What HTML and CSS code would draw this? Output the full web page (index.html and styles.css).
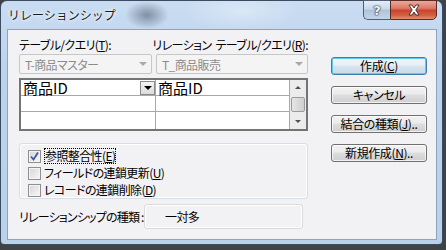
FILE: index.html
```html
<!DOCTYPE html>
<html>
<head>
  <meta charset="utf-8">
  <link rel="stylesheet" href="styles.css">
</head>
<body>
  <div class="window">
    <div class="titlebar">
      <span class="title">リレーションシップ</span>
      <div class="caption">
        <button class="cap-btn help">?</button>
        <button class="cap-btn close">
          <svg viewBox="0 0 16 12">
            <path d="M3,1H6L8,4L10,1H13L9.8,6L13,11H10L8,8L6,11H3L6.2,6Z"/>
          </svg>
        </button>
      </div>
    </div>

    <div class="client">
      <div class="main">
        <div class="labels">
          <span class="label-left">テーブル/クエリ(<u>T</u>):</span>
          <span>リレーション<span class="gap"></span>テーブル/クエリ(<u>R</u>):</span>
        </div>

        <div class="combos">
          <div class="combo combo-left"><span>T-商品マスター</span><i class="arrow"></i></div>
          <div class="combo combo-right"><span>T_商品販売</span><i class="arrow"></i></div>
        </div>

        <div class="grid">
          <div class="cell first">商品ID<span class="drop"><i></i></span></div>
          <div class="cell">商品ID</div>
          <div class="scroll">
            <span class="sb-arrow up"><i></i></span>
            <span class="sb-thumb"></span>
            <span class="sb-arrow down"><i></i></span>
          </div>
          <div class="cell first"></div>
          <div class="cell"></div>
          <div class="cell first last"></div>
          <div class="cell last"></div>
        </div>

        <div class="group">
          <label class="check-row">
            <span class="check on">
              <svg viewBox="0 0 11 11"><path d="M2,5.5L4.5,8.5L9,1.5"/></svg>
            </span>
            <span class="focus">参照整合性(<u>E</u>)</span>
          </label>
          <label class="check-row">
            <span class="check"></span>
            <span>フィールドの連鎖更新(<u>U</u>)</span>
          </label>
          <label class="check-row">
            <span class="check"></span>
            <span>レコードの連鎖削除(<u>D</u>)</span>
          </label>
        </div>

        <div class="reltype">
          <span class="reltype-label">リレーションシップの種類&nbsp;:</span>
          <div class="reltype-box">一対多</div>
        </div>
      </div>

      <div class="side">
        <button class="btn default">作成(<u>C</u>)</button>
        <button class="btn">キャンセル</button>
        <button class="btn">結合の種類(<u>J</u>)..</button>
        <button class="btn">新規作成(<u>N</u>)..</button>
      </div>
    </div>
  </div>
</body>
</html>
```

FILE: styles.css
```css
* {
  box-sizing: border-box;
}

body {
  width: 446px;
  height: 250px;
  margin: 0;
  overflow: hidden;
  background: #3f4346;
  font-family: "Noto Sans CJK JP", sans-serif;
  font-size: 12px;
  color: #000;
}

u {
  text-decoration: underline;
  text-underline-offset: 1px;
}

.window {
  width: 443px;
  height: 245px;
  display: flex;
  flex-direction: column;
  padding: 0 5px 4px 6px;
  border: 1px solid #3b4b60;
  border-radius: 7px 7px 4px 4px;
  background:
    radial-gradient(ellipse 22px 14px at 146px 14px, rgba(60, 70, 85, 0.5), rgba(60, 70, 85, 0)),
    radial-gradient(ellipse 60px 20px at 240px 10px, rgba(255, 255, 255, 0.35), rgba(255, 255, 255, 0)),
    linear-gradient(#c9dcf2, #bcd3ec 30%, #b9d1ea);
}

/* title bar */

.titlebar {
  height: 28px;
  display: flex;
  align-items: flex-start;
}

.title {
  padding: 6px 0 0 1px;
  font-size: 12px;
  line-height: 16px;
  color: #1a1a1a;
  text-shadow: 0 0 5px #fff, 0 0 3px #fff;
}

.caption {
  display: flex;
  margin-left: auto;
  margin-top: -1px;
}

.cap-btn {
  height: 20px;
  padding: 0;
  border: 1px solid #4f5f74;
  display: flex;
  align-items: center;
  justify-content: center;
}

.help {
  width: 27px;
  border-right: none;
  border-radius: 0 0 0 5px;
  background: linear-gradient(#e4eef9, #c8d8ea 45%, #aec3da 50%, #c3d5ea);
  font-family: "DejaVu Sans", sans-serif;
  font-size: 13px;
  font-weight: bold;
  color: #f4f4f4;
  text-shadow: 0 0 1px #2b3a4d, 0 0 1px #2b3a4d, 0 0 2px #2b3a4d;
}

.close {
  width: 47px;
  border-radius: 0 0 5px 0;
  border-color: #5a2b24;
  background: linear-gradient(#eaa898, #dd7a68 40%, #c9432f 52%, #d3613f 80%, #e49072);
}

.close svg {
  width: 16px;
  height: 12px;
  fill: #fff;
  stroke: #3a2a2a;
  stroke-width: 0.9;
}

/* client area */

.client {
  flex: 1;
  display: flex;
  gap: 23px;
  padding: 8px 9px 0 11px;
  background: #f2f2f4;
  border: 1px solid #8ea4bc;
  letter-spacing: -0.6px;
  white-space: nowrap;
}

.main {
  width: 289px;
  display: flex;
  flex-direction: column;
}

.labels {
  display: flex;
  height: 14px;
  line-height: 14px;
  font-feature-settings: "palt";
}

.labels .gap {
  display: inline-block;
  width: 4px;
}

.label-left {
  width: 136px;
}

.combos {
  display: flex;
  gap: 4px;
  margin-top: 2px;
}

.combo {
  height: 20px;
  display: flex;
  align-items: center;
  padding: 0 4px 0 5px;
  background: #f4f4f4;
  border: 1px solid #c7c7c7;
  border-radius: 2px;
  color: #8c8c8c;
  font-feature-settings: "palt";
}

.combo-left {
  width: 133px;
}

.combo-right {
  flex: 1;
}

.combo .arrow {
  margin-left: auto;
  border-left: 4px solid transparent;
  border-right: 4px solid transparent;
  border-top: 4px solid #a9a9a9;
}

/* field grid */

.grid {
  height: 53px;
  margin-top: 4px;
  display: grid;
  grid-template-columns: 135px 1fr 16px;
  grid-template-rows: 16px 16px 17px;
  background: #fff;
  border: 2px solid #747474;
  letter-spacing: 0;
}

.cell {
  display: flex;
  align-items: center;
  padding-left: 2px;
  border-bottom: 1px solid #a8a8a8;
  border-right: 1px solid #a8a8a8;
  font-size: 15px;
  line-height: 15px;
}

.cell.last {
  border-bottom: none;
}

.drop {
  width: 15px;
  height: 14px;
  margin-left: auto;
  display: flex;
  align-items: center;
  justify-content: center;
  border: 1px solid #8a8a8a;
  background: linear-gradient(#f4f4f4, #dcdcdc);
}

.drop i {
  border-left: 4px solid transparent;
  border-right: 4px solid transparent;
  border-top: 4px solid #000;
}

.scroll {
  grid-column: 3;
  grid-row: 1 / 4;
  display: flex;
  flex-direction: column;
  background: #ececec;
}

.sb-arrow {
  height: 15px;
  display: flex;
  align-items: center;
  justify-content: center;
}

.sb-arrow i {
  border-left: 3px solid transparent;
  border-right: 3px solid transparent;
}

.sb-arrow.up i {
  border-bottom: 3px solid #505050;
}

.sb-arrow.down {
  margin-top: auto;
}

.sb-arrow.down i {
  border-top: 3px solid #505050;
}

.sb-thumb {
  height: 15px;
  margin: 2px 1px 0;
  border: 1px solid #9a9a9a;
  border-radius: 2px;
  background: linear-gradient(90deg, #e6e6e6, #cfcfcf);
}

/* options */

.group {
  height: 56px;
  margin-top: 12px;
  padding: 4px 8px;
  display: flex;
  flex-direction: column;
  border: 1px solid #d5dfe5;
  border-radius: 3px;
  box-shadow: inset 0 0 0 1px #fff;
  font-feature-settings: "palt";
}

.check-row {
  height: 16px;
  display: flex;
  align-items: center;
  gap: 3px;
  line-height: 16px;
}

.check-row + .check-row {
  margin-top: 1px;
}

.check {
  width: 13px;
  height: 13px;
  border: 1px solid #8e8f8f;
  background: linear-gradient(135deg, #d6d6d6, #f8f8f8);
  box-shadow: inset 0 0 0 1px #f4f4f4;
}

.check svg {
  display: block;
  width: 11px;
  height: 11px;
  fill: none;
  stroke: #3f56a0;
  stroke-width: 1.8;
}

.focus {
  outline: 1px dotted #000;
  outline-offset: -1px;
  padding: 0 1px;
}

.reltype {
  height: 25px;
  margin-top: 5px;
  display: flex;
  align-items: center;
  font-feature-settings: "palt";
}

.reltype-label {
  letter-spacing: -0.8px;
}

.reltype-box {
  width: 159px;
  height: 25px;
  margin: 0 5px 0 auto;
  padding-left: 20px;
  display: flex;
  align-items: center;
  border: 1px solid #dadada;
  border-radius: 3px;
  box-shadow: inset 0 0 0 1px #fff;
}

/* buttons */

.side {
  width: 96px;
  display: flex;
  flex-direction: column;
  gap: 11px;
  padding-top: 19px;
}

.btn {
  height: 18px;
  padding: 0;
  font-family: inherit;
  font-size: 12px;
  line-height: 14px;
  letter-spacing: -0.4px;
  color: #000;
  border: 1px solid #707070;
  border-radius: 3px;
  background: linear-gradient(#f2f2f2, #ebebeb 45%, #dddddd 50%, #cfcfcf);
  box-shadow: inset 0 0 0 1px rgba(255, 255, 255, 0.7);
  font-feature-settings: "palt";
}

.btn.default {
  border-color: #3c7fb1;
  box-shadow: inset 0 0 0 1px #62c8f0;
  background: linear-gradient(#f0f6fa, #e7f0f6 45%, #d6e5ee 50%, #c8dbe7);
}
```
